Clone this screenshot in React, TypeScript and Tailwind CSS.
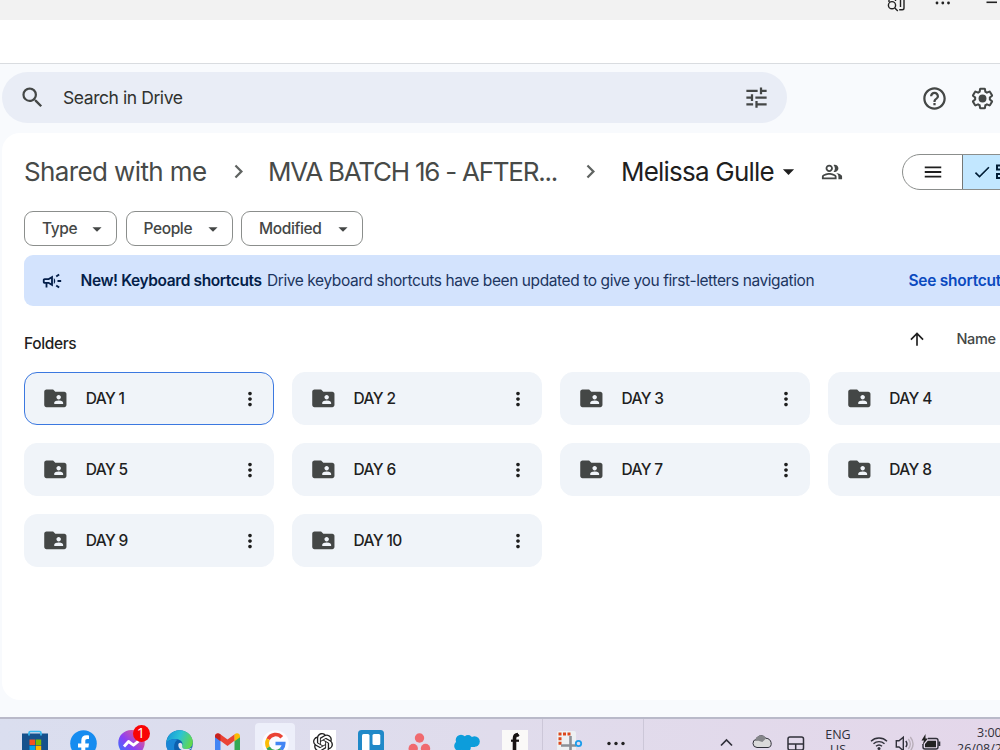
import type { ReactNode } from "react";
import {
  MdSearch,
  MdTune,
  MdHelpOutline,
  MdOutlinePeopleAlt,
  MdFolderShared,
  MdMoreVert,
  MdArrowUpward,
  MdOutlineCampaign,
  MdMenu,
  MdCheck,
  MdArrowDropDown,
  MdChevronRight,
} from "react-icons/md";
import { SiOpenai } from "react-icons/si";

const days = [1, 2, 3, 4, 5, 6, 7, 8, 9, 10];

function BrowserBar() {
  return (
    <div className="relative h-5 bg-[#f2f2f2]">
      <svg className="absolute left-[885px] top-0" width="115" height="20" viewBox="0 0 115 20" fill="none" stroke="#222" strokeWidth="1.4">
        <circle cx="7" cy="5.2" r="3.6" />
        <path d="M9.8 8l3 3M4 2V0M10.5 1V0M15.500 0v7M19 0v8q0 1.800-1.800 1.800h-3" />
        <g fill="#222" stroke="none">
          <circle cx="52" cy="3" r="1.400" />
          <circle cx="57.800" cy="3" r="1.400" />
          <circle cx="63.500" cy="3" r="1.400" />
        </g>
        <path d="M101.500 2.300h10.500" strokeWidth="1.600" />
      </svg>
    </div>
  );
}

function SettingsIcon() {
  return (
    <svg width="27" height="27" viewBox="0 0 24 24" fill="none" stroke="currentColor" strokeWidth="2" strokeLinejoin="round">
      <path
        transform="translate(1.080 1.080) scale(.91)"
        d="M19.14 12.94c.04-.3.06-.61.06-.94 0-.32-.02-.64-.07-.94l2.03-1.58c.18-.14.23-.41.12-.61l-1.92-3.32c-.12-.22-.37-.29-.59-.22l-2.390.96c-.5-.38-1.03-.7-1.62-.94l-.36-2.54c-.04-.24-.24-.41-.48-.41h-3.840c-.24 0-.43.17-.47.41l-.36 2.54c-.59.24-1.13.57-1.62.94l-2.390-.96c-.22-.08-.47 0-.59.22L2.74 8.870c-.12.21-.08.47.12.61l2.03 1.580c-.05.3-.09.63-.09.94s.02.64.07.94l-2.03 1.580c-.18.14-.23.41-.12.61l1.920 3.320c.12.22.37.29.59.22l2.390-.96c.5.38 1.030.7 1.620.94l.36 2.540c.05.24.24.41.48.41h3.840c.24 0 .44-.17.47-.41l.36-2.540c.59-.24 1.130-.56 1.620-.94l2.390.96c.22.08.47 0 .59-.22l1.920-3.320c.12-.22.07-.47-.12-.61l-2.010-1.580z"
      />
      <circle cx="12" cy="12" r="3.500" fill="currentColor" stroke="none" />
    </svg>
  );
}

function Header() {
  return (
    <div className="flex h-[69px] pl-[2px] pt-2">
      <div className="flex h-[51px] w-[785px] items-center rounded-full bg-[#e9edf6] pl-[17px] pr-[17px]">
        <MdSearch className="size-[27px] text-[#444746]" />
        <span className="ml-[17px] mt-[2px] text-[17.500px] tracking-[-0.430px] text-[#30322f]">Search in Drive</span>
        <MdTune className="ml-auto size-[27px] text-[#444746]" />
      </div>
      <div className="ml-[133.500px] mt-[1px] flex h-[51px] shrink-0 items-center gap-[21px] text-[#444746]">
        <MdHelpOutline className="size-[27px]" />
        <SettingsIcon />
      </div>
    </div>
  );
}

function Breadcrumbs() {
  return (
    <div className="flex h-[35px] items-center whitespace-nowrap text-[26px] leading-[35px] text-[#474a48]">
      <span className="w-[184px] shrink-0 tracking-[-0.620px]">Shared with me</span>
      <MdChevronRight className="ml-[17px] size-[27px] shrink-0 text-[#5f6361]" />
      <span className="ml-[16px] w-[292px] shrink-0 tracking-[-1.240px]">MVA BATCH 16 - AFTER...</span>
      <MdChevronRight className="ml-[17px] size-[27px] shrink-0 text-[#5f6361]" />
      <span className="ml-[17px] w-[155px] shrink-0 tracking-[-0.780px] text-[#1f1f1f]">Melissa Gulle</span>
      <MdArrowDropDown className="-ml-[1px] size-[27px] shrink-0 text-[#1f1f1f]" />
      <MdOutlinePeopleAlt className="ml-[19px] size-[22px] shrink-0 text-[#444746]" />
      <div className="ml-[59px] flex h-[36px] w-[120px] shrink-0 overflow-hidden rounded-full border border-[#8b8e8c] text-[#1f1f1f]">
        <div className="flex w-[60px] items-center justify-center border-r border-[#747775]">
          <MdMenu className="size-[22px]" />
        </div>
        <div className="flex flex-1 items-center bg-[#c2e7ff] pl-[9px] text-[#001d35]">
          <MdCheck className="size-[20px] shrink-0" />
          <svg className="ml-[3px] shrink-0" width="20" height="18" viewBox="0 0 20 18" fill="none" stroke="currentColor" strokeWidth="2">
            <path d="M2 2.500h5v4H2zM2 11h5v4H2zM11 2.500h5v4h-5zM11 11h5v4h-5z" />
          </svg>
        </div>
      </div>
    </div>
  );
}

function Chip({ label, className }: { label: string; className: string }) {
  return (
    <div className={`flex h-[35px] items-center justify-between rounded-[9px] border border-[#8b8e8c] pl-[17px] pr-[8px] text-[15.500px] font-medium text-[#444746] ${className}`}>
      <span>{label}</span>
      <MdArrowDropDown className="size-[22px]" />
    </div>
  );
}

function Banner() {
  return (
    <div className="mt-[9px] flex h-[51px] items-center whitespace-nowrap rounded-l-[9px] bg-[#d3e3fd] pl-[17px] text-[15.500px] text-[#041e49]">
      <MdOutlineCampaign className="size-[22px] shrink-0" />
      <span className="ml-[17.500px] w-[186.500px] shrink-0 font-semibold tracking-[-0.390px]">New! Keyboard shortcuts</span>
      <span className="w-[641.500px] shrink-0 tracking-[-0.410px] text-[#1c355f]">Drive keyboard shortcuts have been updated to give you first-letters navigation</span>
      <span className="shrink-0 font-semibold tracking-[-0.250px] text-[#0b4abf]">See shortcuts</span>
    </div>
  );
}

function FolderCard({ day }: { day: number }) {
  return (
    <div className={`flex h-[53px] items-center rounded-[13px] border bg-[#f0f4f9] pl-[17px] pr-[12px] text-[#1f1f1f] ${day === 1 ? "border-[#3b78e0]" : "border-[#f0f4f9]"}`}>
      <MdFolderShared className="size-[26.700px] text-[#444746]" />
      <span className="ml-[17px] text-[15.500px] font-medium tracking-[-0.620px]">DAY {day}</span>
      <MdMoreVert className="ml-auto size-[22px]" />
    </div>
  );
}

function Content() {
  return (
    <main className="ml-[2px] h-[567px] overflow-hidden rounded-l-[18px] bg-white pl-[22px] pt-[21px]">
      <Breadcrumbs />
      <div className="mt-[22px] flex gap-[8.500px]">
        <Chip label="Type" className="w-[93px] tracking-[-0.400px]" />
        <Chip label="People" className="w-[107px] tracking-[-0.380px]" />
        <Chip label="Modified" className="w-[122px] tracking-[-0.380px]" />
      </div>
      <Banner />
      <div className="flex h-[66px] items-center">
        <h2 className="mt-[9px] w-[55px] text-[15.500px] font-medium tracking-[-0.380px] text-[#1f1f1f]">Folders</h2>
        <MdArrowUpward className="mb-[1px] ml-[828px] size-[20px] shrink-0 text-[#1f1f1f]" />
        <span className="ml-[29.500px] text-[14.500px] font-medium tracking-[-0.400px] text-[#444746]">Name</span>
      </div>
      <div className="grid w-[1053.500px] grid-cols-4 gap-[18px]">
        {days.map((day) => (
          <FolderCard key={day} day={day} />
        ))}
      </div>
    </main>
  );
}

function Slot({ children, active = false }: { children: ReactNode; active?: boolean }) {
  return (
    <div className={`flex h-[45px] w-[40px] shrink-0 items-start justify-center rounded-t-[4px] pt-[7px] ${active ? "bg-[#edeffa]" : ""}`}>
      {children}
    </div>
  );
}

function Taskbar() {
  return (
    <footer className="flex h-[33px] items-start overflow-hidden border-t-2 border-[#b9b9c9] bg-gradient-to-r from-[#dadeef] via-[#e0dcec] to-[#e4d7ea] pl-[15px] pt-[4px]">
      <div className="flex gap-[8px]">
        <Slot>
          <svg width="26" height="26" viewBox="0 0 26 26">
            <path d="M0 3.500h26V23q0 3-3 3H3q-3 0-3-3z" fill="#15518c" />
            <path d="M7 5.500V3q0-1.500 1.500-1.500h9Q19 1.500 19 3v2.500" fill="none" stroke="#35b8ef" strokeWidth="1.700" />
            <path fill="#f25022" d="M7.500 9.500H13V15H7.500z" />
            <path fill="#7fba00" d="M13.700 9.500h5.500V15h-5.500z" />
            <path fill="#00a4ef" d="M7.500 15.700H13v5.500H7.500z" />
            <path fill="#ffb900" d="M13.700 15.700h5.500v5.500h-5.500z" />
          </svg>
        </Slot>
        <Slot>
          <svg width="27" height="27" viewBox="0 0 27 27">
            <circle cx="13.500" cy="13.500" r="13.300" fill="#168cf0" />
            <path fill="#fff" d="M11.300 27v-9.500H8v-4h3.300v-2.800c0-3.600 2-5.400 5.100-5.400 1.200 0 2.300.2 2.600.2v3.500h-1.700c-1.600 0-2 .9-2 2v2.500h3.700l-.6 4h-3.100V27z" />
          </svg>
        </Slot>
        <Slot>
          <div className="relative">
            <svg width="27" height="27" viewBox="0 0 27 27">
              <defs>
                <linearGradient id="messenger" x1="0" y1="1" x2="1" y2="0">
                  <stop offset="0" stopColor="#1688ff" />
                  <stop offset=".45" stopColor="#8b40f5" />
                  <stop offset="1" stopColor="#ff6570" />
                </linearGradient>
              </defs>
              <path fill="url(#messenger)" d="M13.500 0C6 0 .3 5.500.3 12.800c0 4 1.600 7.300 4.300 9.700V27l4-2.200c1.500.5 3.100.7 4.900.7 7.500 0 13.200-5.400 13.200-12.700S21 0 13.500 0z" />
              <path d="M6 16.500l4.500-5 5 3.700 5-4" fill="none" stroke="#fff" strokeWidth="2.800" strokeLinejoin="round" />
            </svg>
            <span className="absolute -top-[5px] left-[15px] flex size-[17px] items-center justify-center rounded-full bg-[#f90505] font-['Open_Sans',sans-serif] text-[14.500px] leading-none text-white">1</span>
          </div>
        </Slot>
        <Slot>
          <svg width="27" height="27" viewBox="0 0 27 27">
            <defs>
              <linearGradient id="edge" x1="0" y1="0.200" x2="1" y2="0.500">
                <stop offset="0" stopColor="#1694d8" />
                <stop offset=".5" stopColor="#2cc3d5" />
                <stop offset="1" stopColor="#62d84c" />
              </linearGradient>
            </defs>
            <circle cx="13.500" cy="13.500" r="13.300" fill="#0d5fae" />
            <path fill="url(#edge)" d="M.2 13C1 5 6.500.2 13.500.2c8 0 13.300 5.800 13.300 11.800 0 4.500-3 7-6.800 7-3 0-5-1.200-4-3 1.500-3-.5-5.500-3.500-6.500C8.500 8.300 3 9.500.2 13z" />
            <path fill="#1a86d6" d="M.2 13C3 9.500 8.500 8.300 12 9.600 7 12 7 20 11 26.500 4 25-.3 19.500.2 13z" />
            <path fill="#dfe3f2" d="M12.300 15c0-2.500 3.400-3.300 4 .1-.8 2.700.6 3.900 4.700 3.900 2 0 4-.8 5-1.500-1.500 4-13.700 5-13.700-2.500z" />
          </svg>
        </Slot>
        <Slot>
          <svg className="mt-[3px]" width="25" height="20" viewBox="0 0 25 20">
            <path fill="#4285f4" d="M0 3l5.500 4v12H2q-2 0-2-2z" />
            <path fill="#34a853" d="M25 3l-5.500 4v12H23q2 0 2-2z" />
            <path fill="#ea4335" d="M0 3.500C0 .5 3-.6 5.300 1.200L12.500 6.500l7.200-5.300v6.300L12.500 13 0 3.700z" />
            <path fill="#fbbc04" d="M19.500 1.300C22-.6 25 .5 25 3.500v.7l-5.500 4z" />
            <path fill="#c5221f" d="M0 3.500v.7l5.500 4V1.400C3-.6 0 .5 0 3.500z" />
          </svg>
        </Slot>
        <Slot active>
          <svg width="27" height="27" viewBox="0 0 27 27">
            <circle cx="13.500" cy="13.500" r="13.300" fill="#fbfbff" />
            <g fill="none" strokeWidth="3.700">
              <path stroke="#ea4335" d="M6.100 9.200A8.300 8.300 0 0 1 19.800 7.300" />
              <path stroke="#fbbc05" d="M6.100 17.500A8.300 8.300 0 0 1 6.100 9.200" />
              <path stroke="#34a853" d="M19 19.500A8.300 8.300 0 0 1 6.100 17.500" />
              <path stroke="#4285f4" d="M13.500 13.500h8.200A8.300 8.300 0 0 1 19 19.500" />
            </g>
          </svg>
        </Slot>
        <Slot>
          <div className="flex size-[26px] items-center justify-center bg-white">
            <SiOpenai className="size-[20px] text-[#222]" />
          </div>
        </Slot>
        <Slot>
          <svg width="26" height="26" viewBox="0 0 26 26">
            <rect width="26" height="26" rx="3.500" fill="#2089c8" />
            <rect x="4" y="4" width="7.500" height="18" rx="1.500" fill="#fff" />
            <rect x="14.500" y="4" width="7.800" height="11" rx="1.500" fill="#fff" />
          </svg>
        </Slot>
        <Slot>
          <svg className="mt-[3px]" width="23" height="23" viewBox="0 0 23 23" fill="#f06a6f">
            <circle cx="11.500" cy="5" r="4.700" />
            <circle cx="5.200" cy="15.500" r="4.700" />
            <circle cx="17.500" cy="15.500" r="4.700" />
          </svg>
        </Slot>
        <Slot>
          <svg className="mt-[4px]" width="26" height="19" viewBox="0 0 26 19" fill="#0d9ddb">
            <circle cx="7" cy="6" r="5.300" />
            <circle cx="14" cy="5.800" r="4.700" />
            <circle cx="20.500" cy="7.500" r="5.300" />
            <circle cx="5" cy="12" r="4.800" />
            <circle cx="12" cy="13.500" r="4.800" />
            <path d="M5 5h16v8H5z" />
          </svg>
        </Slot>
        <Slot>
          <div className="flex size-[26px] items-center justify-center bg-[#faf9f8] text-[#171212]">
            <svg width="26" height="26" viewBox="0 0 26 26" fill="none" stroke="currentColor">
              <path strokeWidth="3.600" d="M12.500 26V8.500q0-3.800 3.500-4" />
              <path strokeWidth="2.200" d="M9 10.700h8" />
              <circle cx="15.700" cy="5.300" r="1.500" fill="currentColor" stroke="none" />
            </svg>
          </div>
        </Slot>
      </div>
      <div className="-mt-[4px] ml-[7px] flex h-[33px] w-[102px] shrink-0 border-x border-[#ccc7d8] pl-[13px] pt-[12px]">
        <svg width="27" height="22" viewBox="0 0 27 22">
          <rect x="1" width="19" height="22" rx="2" fill="#edf0f3" />
          <path d="M2.500 3h13M4 6.200V15" stroke="#dd471b" strokeWidth="3" strokeDasharray="3 1.500" fill="none" />
          <path d="M14.500 5v17M5 14.500h15" stroke="#8b9097" strokeWidth="2.600" />
          <circle cx="22.500" cy="12.500" r="2.700" fill="none" stroke="#1c9deb" strokeWidth="1.800" />
        </svg>
        <svg className="ml-[24px] mt-[10px]" width="18" height="5" viewBox="0 0 18 5" fill="#222">
          <circle cx="2" cy="2.500" r="1.700" />
          <circle cx="9" cy="2.500" r="1.700" />
          <circle cx="16" cy="2.500" r="1.700" />
        </svg>
      </div>
      <svg className="ml-[75px] mt-[7px] shrink-0" width="88" height="26" viewBox="0 0 88 26" fill="none" stroke="#30303a" strokeWidth="1.700">
        <path d="M2 15.500l5.500-5.500 5.500 5.500" />
        <path d="M38 17.500a4.200 4.200 0 0 1-.7-8.300c1.300-4.300 7.300-4.500 9.300-1 3.500.2 5 2 5.500 4.500.5 2.500-.7 4.800-3 4.800z" fill="#dadada" strokeWidth="1" />
        <path d="M36 11c1-6.500 9-7 11-2.500l-3.700 3.600-4-1.400z" fill="#85868a" stroke="none" />
        <rect x="69" y="7" width="15.500" height="13" rx="2" strokeWidth="1.500" />
        <path d="M69 14h15.500M76.700 14v6" strokeWidth="1.500" />
      </svg>
      <div className="ml-[17px] mt-[3.500px] w-[28px] shrink-0 text-center font-['Open_Sans',sans-serif] text-[12.500px] leading-[15px] text-[#30303a]">
        <div>ENG</div>
        <div>US</div>
      </div>
      <svg className="ml-[18px] mt-[5.500px] shrink-0" width="74" height="26" viewBox="0 0 74 26" fill="none" stroke="#30303a" strokeWidth="1.400">
        <path d="M1 12.300a11.500 11.500 0 0 1 16 0M3.500 14.800a8 8 0 0 1 11 0M6 17.300a4.500 4.500 0 0 1 6 0" />
        <circle cx="9" cy="19.500" r="1.500" fill="#30303a" stroke="none" />
        <g transform="translate(-.7 0)">
          <path d="M27 11.800h2.700l4.300-3.600v13.500l-4.300-3.700H27z" />
          <path d="M36.500 12q2.300 3 0 6" />
          <path d="M39 10q4 5 0 10M41 8q5.500 7 0 14" stroke="#b9afba" />
        </g>
        <path d="M58 9.500h8q2 0 2 2v6.500q0 2-2 2H55q-2 0-2-2v-3" />
        <path d="M55 18.300V15l2.800-3.300H66v6.600z" fill="#222" stroke="none" />
        <path d="M69.300 12.500v4.500" strokeWidth="2" />
        <path d="M55.500 5l-4 6.500h2.500L52.500 16l5.500-6.500h-2.500z" fill="#222" stroke="none" />
      </svg>
      <div className="ml-[13px] mt-[1.500px] w-[80px] shrink-0 whitespace-nowrap font-['Open_Sans',sans-serif] text-[12.500px] leading-[16.500px] text-[#30303a]">
        <div className="pl-[20px]">3:00 PM</div>
        <div>26/08/2023</div>
      </div>
    </footer>
  );
}

export default function App() {
  return (
    <div className="h-[750px] w-[1000px] overflow-hidden bg-[#f8fafd] font-['Inter',sans-serif]">
      <BrowserBar />
      <div className="h-[44px] border-b border-[#d9dce0] bg-white" />
      <Header />
      <Content />
      <div className="h-[17px]" />
      <Taskbar />
    </div>
  );
}
